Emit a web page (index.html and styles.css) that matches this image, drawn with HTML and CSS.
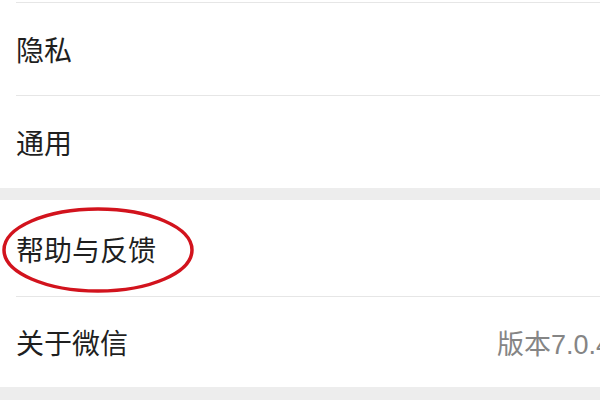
FILE: index.html
```html
<!DOCTYPE html>
<html lang="zh-CN">
<head>
<meta charset="utf-8">
<link rel="stylesheet" href="styles.css">
</head>
<body>
<div class="screen">
  <div class="group group-first">
    <div class="row"><span class="label">聊天</span></div>
    <div class="row"><span class="label">隐私</span></div>
    <div class="row"><span class="label">通用</span></div>
  </div>
  <div class="group">
    <div class="row row-marked">
      <span class="label">帮助与反馈</span>
      <svg class="circle" width="200" height="100" viewBox="0 0 200 100">
        <ellipse cx="98" cy="48" rx="94" ry="41" fill="none" stroke="#d2131d" stroke-width="3.5"/>
      </svg>
    </div>
    <div class="row row-last"><span class="label">关于微信</span><span class="value">版本7.0.4</span></div>
  </div>
</div>
</body>
</html>
```
FILE: styles.css
```css
html, body {
  margin: 0;
  padding: 0;
  background: #ededed;
  overflow: hidden;
  width: 600px;
  height: 400px;
}
.screen {
  width: 640px;
  font-family: "Noto Sans CJK SC", "Noto Sans", sans-serif;
}
.group {
  background: #ffffff;
  margin-bottom: 12px;
}
.group-first {
  margin-top: -90px;
}
.row {
  position: relative;
  height: 92px;
  display: flex;
  align-items: center;
  justify-content: space-between;
  margin-left: 16px;
  padding: 0 0 0 0;
}
.row + .row {
  border-top: 1px solid #e6e6e6;
}
.row-marked {
  height: 96px;
  padding-top: 2px;
  box-sizing: border-box;
}
.row-last {
  height: 90px;
}
.label {
  font-size: 28px;
  color: #1f1f1f;
}
.value {
  font-family: "Liberation Sans", "Noto Sans CJK SC", sans-serif;
  font-size: 27px;
  color: #858585;
  white-space: nowrap;
  margin-left: auto;
  width: 143px;
}
.circle {
  position: absolute;
  left: -16px;
  top: 2px;
}
```
